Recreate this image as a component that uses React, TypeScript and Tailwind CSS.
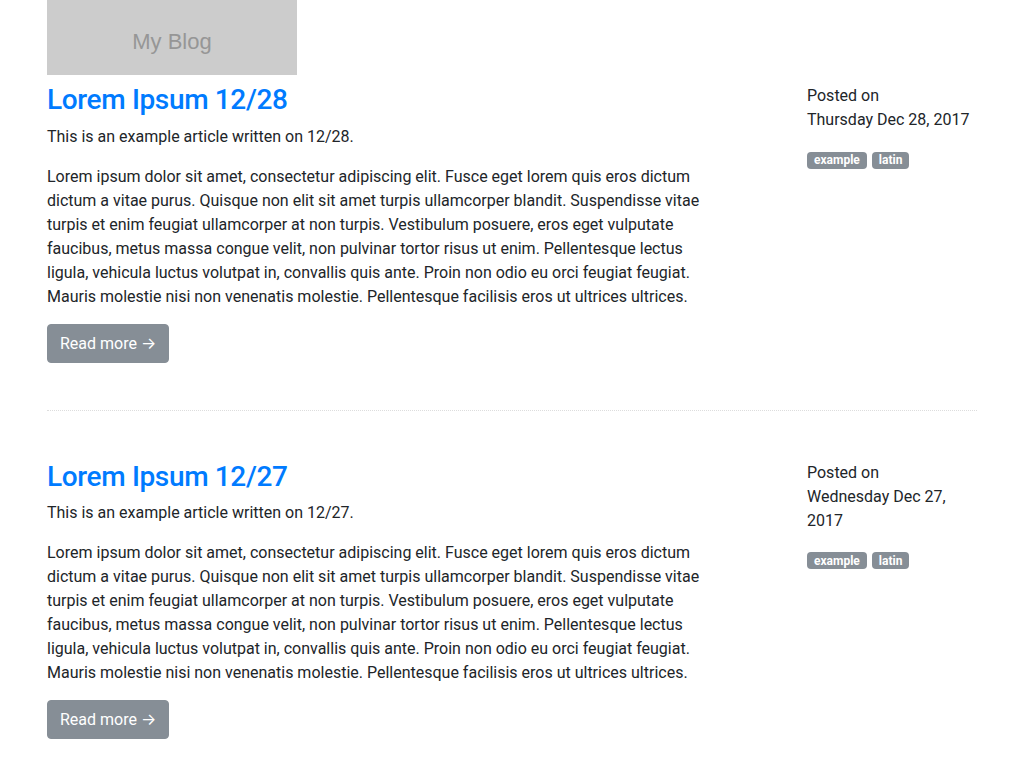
import React from 'react';

const body =
  'Lorem ipsum dolor sit amet, consectetur adipiscing elit. Fusce eget lorem quis eros dictum dictum a vitae purus. Quisque non elit sit amet turpis ullamcorper blandit. Suspendisse vitae turpis et enim feugiat ullamcorper at non turpis. Vestibulum posuere, eros eget vulputate faucibus, metus massa congue velit, non pulvinar tortor risus ut enim. Pellentesque lectus ligula, vehicula luctus volutpat in, convallis quis ante. Proin non odio eu orci feugiat feugiat. Mauris molestie nisi non venenatis molestie. Pellentesque facilisis eros ut ultrices ultrices.';

const posts = [
  { title: 'Lorem Ipsum 12/28', short: '12/28', date: 'Thursday Dec 28, 2017' },
  { title: 'Lorem Ipsum 12/27', short: '12/27', date: 'Wednesday Dec 27, 2017' },
];

const Badge: React.FC<{ children: React.ReactNode }> = ({ children }) => (
  <span className="bg-[#868e96] text-white text-xs font-bold rounded px-[7px] h-[17px] flex items-center">
    {children}
  </span>
);

const Post: React.FC<{ title: string; short: string; date: string }> = ({ title, short, date }) => (
  <div className="flex">
    <div className="w-[668px]">
      <h3 className="text-[28px] leading-[1.2] font-medium tracking-[-0.35px] text-[#007bff] mb-2">{title}</h3>
      <p className="mb-4">This is an example article written on {short}.</p>
      <p className="mb-[15px]">{body}</p>
      <a className="block w-fit bg-[#868e96] text-white rounded px-3 py-[6px] border border-[#868e96] leading-6">
        Read more <span className="font-['Inter',sans-serif]">→</span>
      </a>
    </div>
    <div className="ml-auto w-[170px] pt-[1px]">
      <p className="mb-4">
        Posted on
        <br />
        {date}
      </p>
      <div className="flex gap-[5px] items-center h-6 mt-[1px]">
        <Badge>example</Badge>
        <Badge>latin</Badge>
      </div>
    </div>
  </div>
);

export default function App() {
  return (
    <div className="min-h-[768px] bg-white text-[#212529] text-base leading-6 font-['Roboto',sans-serif]">
      <div className="w-[960px] mx-auto px-[15px]">
        <div className="w-[250px] h-[75px] bg-[#cccccc] flex items-center justify-center pt-[8px]">
          <span className="font-['Liberation_Sans',sans-serif] text-[22px] text-[#969696]">My Blog</span>
        </div>
        <div className="pt-[8px]">
          <Post {...posts[0]} />
          <div className="mt-[47px] mb-[49px] border-t border-dotted border-[#dddddd]" />
          <Post {...posts[1]} />
        </div>
      </div>
    </div>
  );
}
